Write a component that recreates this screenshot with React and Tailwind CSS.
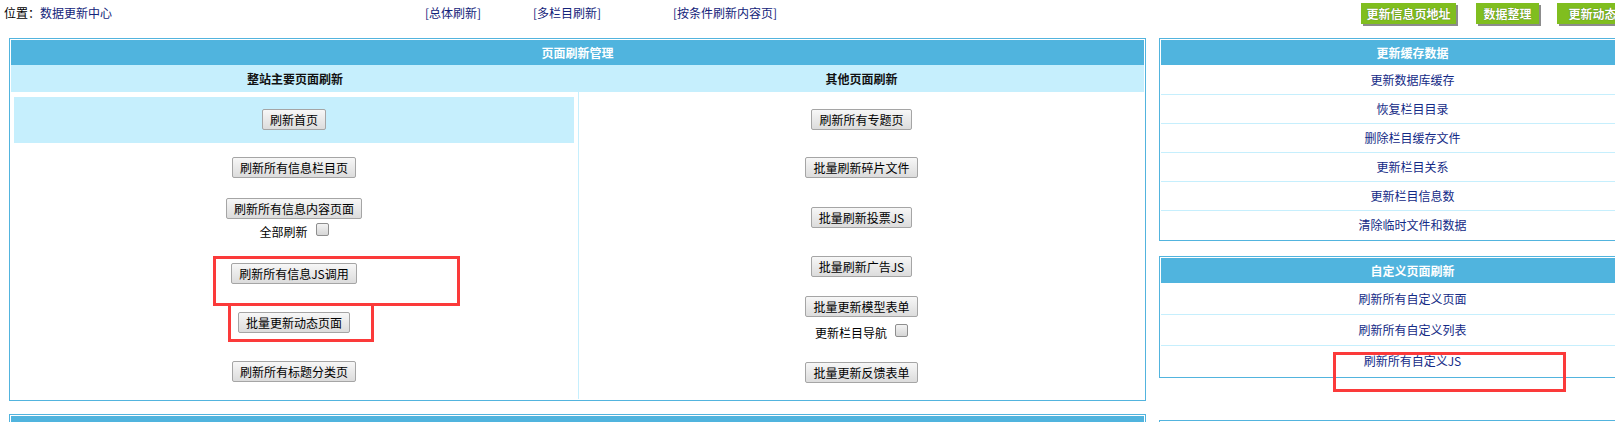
const FONT = "font-['Noto_Sans_CJK_SC','Noto_Sans',sans-serif]";

function Btn({ children, className = '' }) {
  return (
    <div className={`flex justify-center ${className}`}>
      <button className="h-[21px] px-[7px] border border-[#a5a5a5] rounded-[2px] bg-linear-to-b from-[#f7f7f7] to-[#dcdcdc] text-[12px] leading-[19px] text-black whitespace-nowrap">
        {children}
      </button>
    </div>
  );
}

function Check({ label, className }) {
  return (
    <div className={`flex items-center justify-center h-[16px] text-[12px] leading-[16px] text-black ${className}`}>
      <span>{label}</span>
      <span className="ml-[8px] -mt-[5px] w-[13px] h-[13px] border border-[#8e8e8e] rounded-[2px] bg-linear-to-b from-[#f3f3f3] to-[#d6d6d6]" />
    </div>
  );
}

function GreenBtn({ children, className }) {
  return (
    <div
      className={`shrink-0 h-[21px] flex items-center justify-center bg-[#80be1f] text-white font-bold text-[12px] leading-[21px] whitespace-nowrap shadow-[2px_2px_0_#8c8c8c] [text-shadow:0_0_1px_#3d5a0c] ${className}`}
    >
      {children}
    </div>
  );
}

function SideBox({ title, rows, rowH, className = '' }) {
  return (
    <div className={`w-[507px] border border-[#52b4de] p-px bg-white ${className}`}>
      <div className="h-[25px] bg-[#50b4de] flex items-center justify-center text-white font-bold text-[12px]">
        {title}
      </div>
      {rows.map((r, i) => (
        <div
          key={r}
          className={`flex items-center justify-center text-[12px] text-[#132a86] ${i > 0 ? 'border-t border-[#c6effd]' : ''} ${rowH}`}
        >
          {r}
        </div>
      ))}
    </div>
  );
}

export default function App() {
  return (
    <div className={`relative w-[1615px] h-[422px] overflow-hidden bg-white ${FONT}`}>
      {/* top bar */}
      <div className="h-[38px] flex items-start">
        <div className="shrink-0 w-[425px] pl-[4px] pt-[5px] text-[12px] leading-[16px]">
          <span className="text-black">位置：</span>
          <span className="text-[#13237a]">数据更新中心</span>
        </div>
        <div className="shrink-0 w-[108px] pt-[5px] text-[12px] leading-[16px] text-[#13237a]">[总体刷新]</div>
        <div className="shrink-0 w-[140px] pt-[5px] text-[12px] leading-[16px] text-[#13237a]">[多栏目刷新]</div>
        <div className="shrink-0 w-[688px] pt-[5px] text-[12px] leading-[16px] text-[#13237a]">[按条件刷新内容页]</div>
        <div className="shrink-0 flex pt-[3px]">
          <GreenBtn className="w-[95px]">更新信息页地址</GreenBtn>
          <GreenBtn className="w-[63px] ml-[20px]">数据整理</GreenBtn>
          <GreenBtn className="w-[95px] ml-[18px]">更新动态页面</GreenBtn>
        </div>
      </div>

      <div className="flex items-start">
        {/* left main table */}
        <div className="shrink-0 ml-[9px] w-[1137px] flex flex-col">
          <div className="border border-[#52b4de] p-px bg-white">
            <div className="h-[25px] bg-[#50b4de] flex items-center justify-center text-white font-bold text-[12px]">
              页面刷新管理
            </div>
            <div className="h-[27px] bg-[#c6effd] flex text-[12px] font-bold text-[#111]">
              <div className="w-[568px] flex items-center justify-center">整站主要页面刷新</div>
              <div className="flex-1 flex items-center justify-center">其他页面刷新</div>
            </div>
            <div className="h-[307px] flex">
              <div className="shrink-0 w-[568px] border-r border-[#c6effd] pl-[3px] pr-[4px] pt-[5px] flex flex-col">
                <div className="h-[46px] bg-[#c6effd] pt-[12px]">
                  <Btn>刷新首页</Btn>
                </div>
                <Btn className="mt-[14px]">刷新所有信息栏目页</Btn>
                <Btn className="mt-[20px]">刷新所有信息内容页面</Btn>
                <Check className="mt-[5px]" label="全部刷新" />
                <Btn className="mt-[23px]">刷新所有信息JS调用</Btn>
                <Btn className="mt-[28px]">批量更新动态页面</Btn>
                <Btn className="mt-[28px]">刷新所有标题分类页</Btn>
              </div>
              <div className="flex-1 flex flex-col">
                <Btn className="mt-[17px]">刷新所有专题页</Btn>
                <Btn className="mt-[27px]">批量刷新碎片文件</Btn>
                <Btn className="mt-[29px]">批量刷新投票JS</Btn>
                <Btn className="mt-[28px]">批量刷新广告JS</Btn>
                <Btn className="mt-[19px]">批量更新模型表单</Btn>
                <Check className="mt-[8px]" label="更新栏目导航" />
                <Btn className="mt-[21px]">批量更新反馈表单</Btn>
              </div>
            </div>
          </div>
          <div className="mt-[13px] border border-[#52b4de] p-px bg-white">
            <div className="h-[25px] bg-[#50b4de]" />
          </div>
        </div>

        {/* right panel */}
        <div className="shrink-0 ml-[13px] flex flex-col">
          <SideBox
            title="更新缓存数据"
            rowH="h-[29px]"
            rows={['更新数据库缓存', '恢复栏目目录', '删除栏目缓存文件', '更新栏目关系', '更新栏目信息数', '清除临时文件和数据']}
          />
          <SideBox
            className="mt-[15px]"
            title="自定义页面刷新"
            rowH="h-[31px]"
            rows={['刷新所有自定义页面', '刷新所有自定义列表', '刷新所有自定义JS']}
          />
          <div className="mt-[42px] w-[507px] border border-[#52b4de] p-px bg-white">
            <div className="h-[25px] bg-[#50b4de]" />
          </div>
        </div>
      </div>

      {/* red annotation boxes */}
      <div className="absolute left-[213px] top-[256px] w-[247px] h-[50px] border-[3px] border-[#fb3a3a]" />
      <div className="absolute left-[228px] top-[303px] w-[146px] h-[39px] border-[3px] border-[#fb3a3a]" />
      <div className="absolute left-[1333px] top-[352px] w-[233px] h-[40px] border-[3px] border-[#fb3a3a]" />
    </div>
  );
}
